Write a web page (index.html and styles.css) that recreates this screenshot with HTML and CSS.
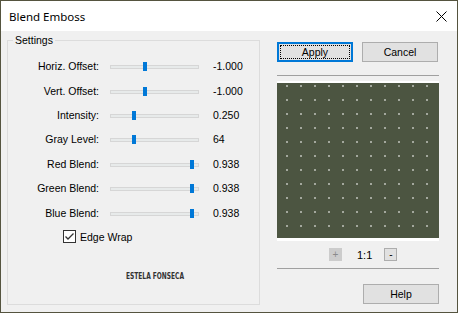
FILE: index.html
```html
<!DOCTYPE html>
<html lang="en">
<head>
    <meta charset="UTF-8" />
    <title>Blend Emboss</title>
    <link rel="stylesheet" href="styles.css">
</head>
<body>
    <div class="dialog">
        <div class="title-bar">
            <span class="title">Blend Emboss</span>
            <svg class="close-icon" width="11" height="11" viewBox="0 0 11 11">
                <path d="M0.5 0.5 L10.5 10.5 M10.5 0.5 L0.5 10.5" stroke="#000" stroke-width="1" fill="none" />
            </svg>
        </div>

        <div class="dialog-body">
            <!-- 參數區 -->
            <fieldset class="settings">
                <legend>Settings</legend>
                <div class="param-grid">
                    <label>Horiz. Offset:</label>
                    <div class="slider"><span class="thumb" style="--pos: 32px"></span></div>
                    <span class="value">-1.000</span>

                    <label>Vert. Offset:</label>
                    <div class="slider"><span class="thumb" style="--pos: 32px"></span></div>
                    <span class="value">-1.000</span>

                    <label>Intensity:</label>
                    <div class="slider"><span class="thumb" style="--pos: 21px"></span></div>
                    <span class="value">0.250</span>

                    <label>Gray Level:</label>
                    <div class="slider"><span class="thumb" style="--pos: 21px"></span></div>
                    <span class="value">64</span>

                    <label>Red Blend:</label>
                    <div class="slider"><span class="thumb" style="--pos: 79px"></span></div>
                    <span class="value">0.938</span>

                    <label>Green Blend:</label>
                    <div class="slider"><span class="thumb" style="--pos: 79px"></span></div>
                    <span class="value">0.938</span>

                    <label>Blue Blend:</label>
                    <div class="slider"><span class="thumb" style="--pos: 79px"></span></div>
                    <span class="value">0.938</span>

                    <label class="edge-wrap">
                        <span class="checkbox">
                            <svg width="13" height="13" viewBox="0 0 13 13">
                                <path d="M2.5 6.5 L5 9 L10.5 3.5" stroke="#333" stroke-width="1.3" fill="none" />
                            </svg>
                        </span>
                        Edge Wrap
                    </label>

                    <div class="credit"><span>ESTELA FONSECA</span></div>
                </div>
            </fieldset>

            <!-- 右側預覽 -->
            <div class="side">
                <div class="btn-row">
                    <button class="btn btn-default">Apply</button>
                    <button class="btn">Cancel</button>
                </div>
                <hr class="sep">
                <div class="preview-frame">
                    <div class="preview"></div>
                </div>
                <div class="zoom-row">
                    <span class="zoom-btn disabled">+</span>
                    <span class="zoom-label">1:1</span>
                    <span class="zoom-btn">-</span>
                </div>
                <hr class="sep">
                <button class="btn help-btn">Help</button>
            </div>
        </div>
    </div>
</body>
</html>
```

FILE: styles.css
```css
*, *::before, *::after {
    box-sizing: border-box;
    margin: 0;
    padding: 0;
}

body {
    background: #4d4b38;
    font-family: 'Liberation Sans', Arial, sans-serif;
    font-size: 10.5px;
    color: #000;
}

.dialog {
    width: 458px;
    height: 313px;
    border: 1px solid #55543f;
    background: #f0f0f0;
    display: flex;
    flex-direction: column;
}

/* 標題列 */
.title-bar {
    height: 30px;
    background: #fff;
    display: flex;
    align-items: center;
    justify-content: space-between;
    padding: 0 10px 0 8px;
}

    .title-bar .title {
        font-family: 'Noto Sans', 'Open Sans', sans-serif;
        font-size: 11.5px;
        padding-top: 1px;
    }

.dialog-body {
    flex: 1;
    display: flex;
    align-items: flex-start;
    padding: 3px 0 0 6px;
}

/* 群組框 */
.settings {
    width: 253px;
    height: 271px;
    border: 1px solid #dcdcdc;
    padding: 0;
}

    .settings legend {
        margin-left: 5px;
        padding: 0 2px;
        line-height: 12px;
    }

.param-grid {
    display: grid;
    grid-template-columns: 91px 114px 1fr;
    grid-auto-rows: 24.4px;
    align-items: center;
    padding-top: 8px;
}

    .param-grid label {
        text-align: right;
    }

.slider {
    position: relative;
    height: 4px;
    margin: 2px 14px 0 11px;
    background: #e7eaea;
    border: 1px solid #d6d6d6;
}

    .slider .thumb {
        position: absolute;
        left: var(--pos);
        top: -4px;
        width: 4px;
        height: 9px;
        background: #0078d7;
    }

.param-grid .edge-wrap {
    grid-column: 1 / -1;
    text-align: left;
    padding-left: 55px;
    display: flex;
    align-items: center;
    gap: 4px;
}

.checkbox {
    width: 13px;
    height: 13px;
    border: 1px solid #333;
    background: #fff;
    display: flex;
}

    .checkbox svg {
        margin: -1px;
    }

.credit {
    grid-column: 1 / -1;
    padding-left: 118px;
    margin-top: 29px;
    font-family: 'Liberation Sans Narrow', 'DejaVu Sans Condensed', sans-serif;
    font-weight: bold;
    font-size: 9px;
    color: #333;
}

    .credit span {
        display: inline-block;
        transform: scaleX(0.73);
        transform-origin: left center;
        white-space: nowrap;
    }

/* 右側欄 */
.side {
    width: 162px;
    margin: 8px 0 0 17px;
    display: flex;
    flex-direction: column;
}

.btn-row {
    display: flex;
    gap: 9px;
}

.btn {
    position: relative;
    width: 76px;
    height: 20px;
    font-family: inherit;
    font-size: 10.5px;
    color: #000;
    background: #e1e1e1;
    border: 1px solid #adadad;
}

.btn-default {
    border-color: #0078d7;
    box-shadow: inset 0 0 0 1px #0078d7;
}

    .btn-default::after {
        content: "";
        position: absolute;
        inset: 2px;
        border: 1px dotted #000;
    }

.sep {
    border: none;
    border-top: 1px solid #a0a0a0;
    height: 0;
    margin-top: 13px;
}

.preview-frame {
    margin-top: 5px;
    height: 160px;
    background: #fff;
    padding-top: 2px;
}

.preview {
    height: 155px;
    background-color: #4c5541;
    background-image: radial-gradient(circle at 10px 3px, #fff 0.4px, rgba(255, 255, 255, 0) 1px);
    background-size: 14px 14px;
}

.zoom-row {
    display: flex;
    align-items: center;
    height: 13px;
    margin-top: 7px;
    padding-left: 52px;
}

.zoom-btn {
    width: 13px;
    height: 13px;
    background: #e1e1e1;
    border: 1px solid #adadad;
    display: flex;
    align-items: center;
    justify-content: center;
    font-size: 10px;
    line-height: 1;
}

    .zoom-btn.disabled {
        background: #cccccc;
        border-color: #cccccc;
        color: #8a8a8a;
    }

.zoom-label {
    margin: 0 12px 0 15px;
    font-size: 11px;
}

.side .sep + .help-btn {
    margin-top: 15px;
    align-self: flex-end;
}

.zoom-row + .sep {
    margin-top: 7px;
}
```
